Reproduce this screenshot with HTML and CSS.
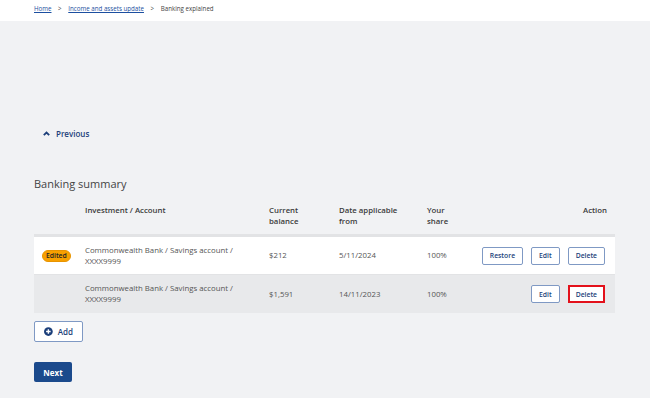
FILE: index.html
```html
<!DOCTYPE html>
<html lang="en">
<head>
	<meta charset="utf-8">
	<title>Banking explained</title>
	<meta name="viewport" content="width=device-width, initial-scale=1">
	<link rel="stylesheet" href="styles.css">
</head>
<body>
	<div class="crumbs">
		<a href="#">Home</a>
		<span class="sep">&gt;</span>
		<a href="#">Income and assets update</a>
		<span class="sep">&gt;</span>
		<span>Banking explained</span>
	</div>
	<div class="main">
		<a class="prev" href="#">
			<svg width="7" height="5" viewBox="0 0 7 5"><path d="M0.8 4.2 L3.5 1.5 L6.2 4.2" fill="none" stroke="#1c3f7a" stroke-width="1.8"/></svg>
			Previous
		</a>
		<h2>Banking summary</h2>
		<table class="summary">
			<thead>
				<tr>
					<th class="c_badge"></th>
					<th class="c_acct">Investment / Account</th>
					<th class="c_bal">Current<br>balance</th>
					<th class="c_date">Date applicable<br>from</th>
					<th class="c_share">Your<br>share</th>
					<th class="c_act">Action</th>
				</tr>
			</thead>
			<tbody>
				<tr>
					<td class="c_badge"><span class="badge">Edited</span></td>
					<td class="c_acct">Commonwealth Bank / Savings account /<br>XXXX9999</td>
					<td class="c_bal">$212</td>
					<td class="c_date">5/11/2024</td>
					<td class="c_share">100%</td>
					<td class="c_act">
						<div class="actions">
							<button class="btn">Restore</button>
							<button class="btn">Edit</button>
							<button class="btn">Delete</button>
						</div>
					</td>
				</tr>
				<tr class="alt">
					<td class="c_badge"></td>
					<td class="c_acct">Commonwealth Bank / Savings account /<br>XXXX9999</td>
					<td class="c_bal">$1,591</td>
					<td class="c_date">14/11/2023</td>
					<td class="c_share">100%</td>
					<td class="c_act">
						<div class="actions">
							<button class="btn">Edit</button>
							<button class="btn focus">Delete</button>
						</div>
					</td>
				</tr>
			</tbody>
		</table>
		<button class="btn add">
			<svg width="9" height="9" viewBox="0 0 10 10"><circle cx="5" cy="5" r="5" fill="#1c3f7a"/><path d="M5 2.4 V7.6 M2.4 5 H7.6" stroke="#fff" stroke-width="1.6"/></svg>
			Add
		</button>
		<button class="next">Next</button>
	</div>
</body>
</html>
```

FILE: styles.css
```css
body {
	margin: 0;
	background: #f1f2f4;
	font-family: "Open Sans", "Liberation Sans", sans-serif;
	color: #3a3a3a;
}
.crumbs {
	background: #fff;
	height: 21px;
	box-sizing: border-box;
	padding: 4px 34px 0;
	font-size: 6.2px;
	color: #444;
}
.crumbs a {
	color: #1c4fa0;
}
.crumbs .sep {
	margin: 0 5px;
}
.main {
	padding: 0 34px;
}
.prev {
	display: flex;
	align-items: center;
	gap: 6px;
	margin: 106px 0 0 9px;
	font-size: 8px;
	font-weight: 600;
	color: #1c3f7a;
	text-decoration: none;
	height: 12px;
}
h2 {
	margin: 37px 0 11px;
	font-size: 11px;
	font-weight: 400;
	color: #444;
}
.summary {
	width: 581px;
	table-layout: fixed;
	border-collapse: collapse;
	font-size: 7.8px;
}
.summary th {
	text-align: left;
	font-weight: 600;
	color: #3a3a3a;
	vertical-align: top;
	padding: 3px 0 7px;
	border-bottom: 3px solid #e2e3e5;
	line-height: 11px;
}
.summary td {
	background: #fff;
	height: 37px;
	padding: 0;
	line-height: 11px;
	color: #555;
	border-bottom: 1px solid #e2e3e5;
}
.summary tr.alt td {
	background: #e8e9eb;
	border-bottom: 0;
	height: 38px;
}
.c_badge {
	width: 51px;
}
.summary td.c_badge {
	padding-left: 8px;
}
.c_acct {
	width: 184px;
}
.c_bal {
	width: 70px;
}
.c_date {
	width: 88px;
}
.c_share {
	width: 55px;
}
.summary .c_act {
	text-align: right;
	padding-right: 8px;
}
.badge {
	display: inline-block;
	background: #f7a000;
	color: #222;
	border-radius: 6px;
	padding: 0 3px;
	font-size: 6.8px;
	font-weight: 600;
	line-height: 10px;
	border: 1px solid #e89400;
}
.actions {
	display: flex;
	justify-content: flex-end;
	gap: 8px;
	padding-right: 2px;
}
.btn {
	font-family: inherit;
	font-size: 6.8px;
	font-weight: 600;
	color: #1c3f7a;
	background: #fff;
	border: 1px solid #7f99c4;
	border-radius: 2px;
	height: 18px;
	padding: 0 7px;
}
.btn.focus {
	border: 2px solid #e3111b;
	border-radius: 0;
	padding: 0 6px;
}
.add {
	display: flex;
	align-items: center;
	gap: 5px;
	margin-top: 8px;
	height: 21px;
	width: 49px;
	padding: 0 9px;
	font-size: 8px;
}
.next {
	display: block;
	margin-top: 20px;
	height: 20px;
	width: 38px;
	background: #1b4a8c;
	color: #fff;
	border: 0;
	border-radius: 2px;
	font-family: inherit;
	font-size: 8px;
	font-weight: 700;
	padding: 0;
}
```
